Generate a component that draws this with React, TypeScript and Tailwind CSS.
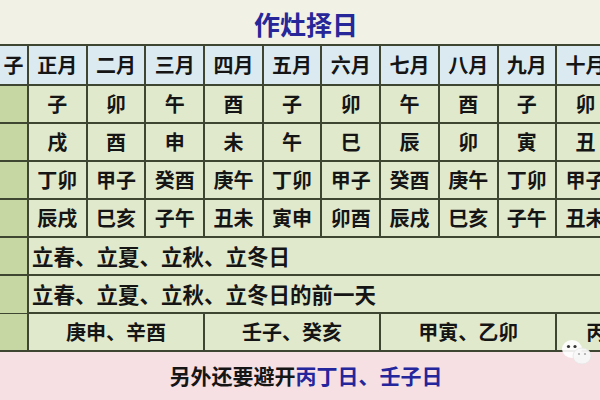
import React from "react";

const months = ["子", "正月", "二月", "三月", "四月", "五月", "六月", "七月", "八月", "九月", "十月"];
const rows = [
  ["子", "卯", "午", "酉", "子", "卯", "午", "酉", "子", "卯"],
  ["戌", "酉", "申", "未", "午", "巳", "辰", "卯", "寅", "丑"],
  ["丁卯", "甲子", "癸酉", "庚午", "丁卯", "甲子", "癸酉", "庚午", "丁卯", "甲子"],
  ["辰戌", "巳亥", "子午", "丑未", "寅申", "卯酉", "辰戌", "巳亥", "子午", "丑未"],
];

const cjk = { fontFamily: '"Noto Sans CJK SC", "Noto Sans", sans-serif' };

function WeChatMark() {
  return (
    <svg width="34" height="30" viewBox="0 0 34 30" className="absolute left-[560px] top-[338px]">
      <ellipse cx="12" cy="11" rx="10" ry="9" fill="#ffffff" opacity="0.9" />
      <ellipse cx="22" cy="18" rx="9" ry="8" fill="#f8f8f8" opacity="0.95" stroke="#e6e6e6" strokeWidth="0.8" />
      <circle cx="8.5" cy="8.5" r="1.6" fill="#333" />
      <circle cx="15" cy="8.5" r="1.6" fill="#333" />
      <circle cx="19" cy="16" r="1.1" fill="#aaa" />
      <circle cx="25" cy="16" r="1.1" fill="#aaa" />
    </svg>
  );
}

export default function App() {
  return (
    <div className="relative w-[600px] h-[400px] overflow-hidden bg-[#f2f1e6]" style={cjk}>
      <div className="h-[44px] flex items-center justify-center text-[26px] font-bold text-[#27279a] pl-[12px] pt-[2px]">
        作灶择日
      </div>
      <div className="w-[620px] bg-[#3e4530] py-[2px] grid grid-cols-[27px_repeat(10,56.7px)] auto-rows-[36px] grid-rows-[38px] gap-[2px] text-[20px] font-bold text-[#151515]">
        {months.map((m, i) => (
          <div key={"h" + i} className="bg-[#dbeaf1] flex items-center justify-center whitespace-nowrap">
            {m}
          </div>
        ))}
        {rows.map((r, ri) => (
          <React.Fragment key={"r" + ri}>
            <div className="bg-[#c6d7a3]" />
            {r.map((c, ci) => (
              <div key={ci} className="bg-[#e1e9cc] flex items-center justify-center whitespace-nowrap">
                {c}
              </div>
            ))}
          </React.Fragment>
        ))}
        <div className="bg-[#c6d7a3]" />
        <div className="col-span-10 bg-[#e1e9cc] flex items-center pl-[3px] text-[21.5px] whitespace-nowrap">
          立春、立夏、立秋、立冬日
        </div>
        <div className="bg-[#c6d7a3] h-[37px]" />
        <div className="col-span-10 bg-[#e1e9cc] flex items-center pl-[3px] text-[21.5px] whitespace-nowrap">
          立春、立夏、立秋、立冬日的前一天
        </div>
        <div className="bg-[#c6d7a3]" />
        <div className="col-span-3 bg-[#e1e9cc] flex items-center justify-center whitespace-nowrap">
          庚申、辛酉
        </div>
        <div className="col-span-3 bg-[#e1e9cc] flex items-center justify-center whitespace-nowrap">
          壬子、癸亥
        </div>
        <div className="col-span-3 bg-[#e1e9cc] flex items-center justify-center whitespace-nowrap">
          甲寅、乙卯
        </div>
        <div className="bg-[#e1e9cc] flex items-center pl-[29px] whitespace-nowrap">
          丙午
        </div>
      </div>
      <div className="h-[48px] bg-[#f6e0e4] flex items-center justify-center pl-[12px] text-[21px] font-bold text-[#151515]">
        另外还要避开<span className="text-[#25259c]">丙丁日、壬子日</span>
      </div>
      <WeChatMark />
    </div>
  );
}
